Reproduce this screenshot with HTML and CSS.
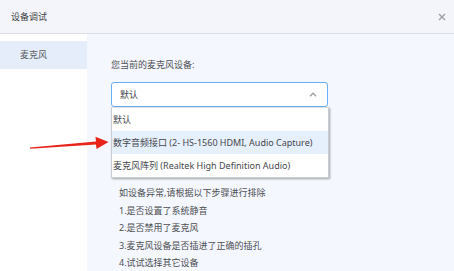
FILE: index.html
```html
<!DOCTYPE html>
<html lang="zh-CN">
<head>
  <meta charset="UTF-8">
  <title>设备调试</title>
  <link rel="stylesheet" href="styles.css">
</head>
<body>
  <div class="dialog">
    <div class="header">
      <span class="title">设备调试</span>
      <svg class="close" width="8" height="8" viewBox="0 0 8 8">
        <path d="M1 1L7 7M7 1L1 7" stroke="#9a9da3" stroke-width="1.3"/>
      </svg>
    </div>

    <div class="main">
      <div class="sidebar">
        <div class="tab active">麦克风</div>
      </div>

      <div class="content">
        <div class="label">您当前的麦克风设备:</div>
        <div class="select">
          <div class="select-box">
            <span>默认</span>
            <svg class="chevron" width="8" height="5" viewBox="0 0 8 5">
              <path d="M1 4.2L4 1.2L7 4.2" fill="none" stroke="#9a9da3" stroke-width="1.3"/>
            </svg>
          </div>
          <ul class="options">
            <li>默认</li>
            <li class="hover">数字音频接口 (2- HS-1560 HDMI, Audio Capture)</li>
            <li>麦克风阵列 (Realtek High Definition Audio)</li>
          </ul>
        </div>

        <div class="notes">
          <p>如设备异常,请根据以下步骤进行排除</p>
          <p>1.是否设置了系统静音</p>
          <p>2.是否禁用了麦克风</p>
          <p>3.麦克风设备是否插进了正确的插孔</p>
          <p>4.试试选择其它设备</p>
        </div>
      </div>
    </div>

    <svg class="arrow" width="454" height="271" viewBox="0 0 454 271">
      <polygon points="30,147.6 96,141.5 95.5,136.8 108.5,142 96.5,149 96,144.6 30,148.8" fill="#e8231a"/>
    </svg>
  </div>
</body>
</html>
```

FILE: styles.css
```css
body {
  margin: 0;
  font-family: "Noto Sans", "Noto Sans CJK SC", sans-serif;
  font-size: 9px;
  color: #4d4f53;
}
.dialog {
  position: relative;
  width: 454px;
  height: 271px;
  overflow: hidden;
  background-color: #f4f7fe;
}
.header {
  height: 33px;
  display: flex;
  align-items: center;
  justify-content: space-between;
  padding: 0 8px 0 11px;
  background-color: #f3f5fb;
  border-bottom: 1px solid #dcdfe6;
}
.title {
  color: #3d3f43;
}
.main {
  display: flex;
  height: 237px;
}
.sidebar {
  width: 87px;
  background-color: #fff;
  padding-top: 7px;
}
.tab {
  height: 28px;
  line-height: 28px;
  padding-left: 20px;
  color: #5a5d62;
}
.tab.active {
  background-color: #e5edfa;
}
.content {
  flex: 1;
  padding: 24px 0 0 24px;
}
.label {
  line-height: 14px;
  margin-bottom: 10px;
}
.select {
  position: relative;
  width: 217px;
}
.select-box {
  height: 23px;
  display: flex;
  align-items: center;
  justify-content: space-between;
  padding: 0 10px 0 8px;
  background-color: #fff;
  border: 1px solid #6aaef5;
  border-radius: 3px;
  color: #3d3f43;
}
.options {
  position: absolute;
  top: 25px;
  left: 0;
  width: 216px;
  margin: 0;
  padding: 0;
  list-style: none;
  background-color: #fff;
  border: 1px solid #c9ccd2;
  border-top-color: #dfe2e8;
  box-shadow: 1px 1px 2px rgba(0,0,0,0.35);
  z-index: 2;
}
.options li {
  height: 23px;
  line-height: 23px;
  padding-left: 1px;
  white-space: nowrap;
  color: #44474c;
}
.options li.hover {
  background-color: #e6f0fc;
}
.notes {
  margin: 77px 0 0 8px;
}
.notes p {
  margin: 0;
  line-height: 17.5px;
}
.arrow {
  position: absolute;
  top: 0;
  left: 0;
  pointer-events: none;
}
```
